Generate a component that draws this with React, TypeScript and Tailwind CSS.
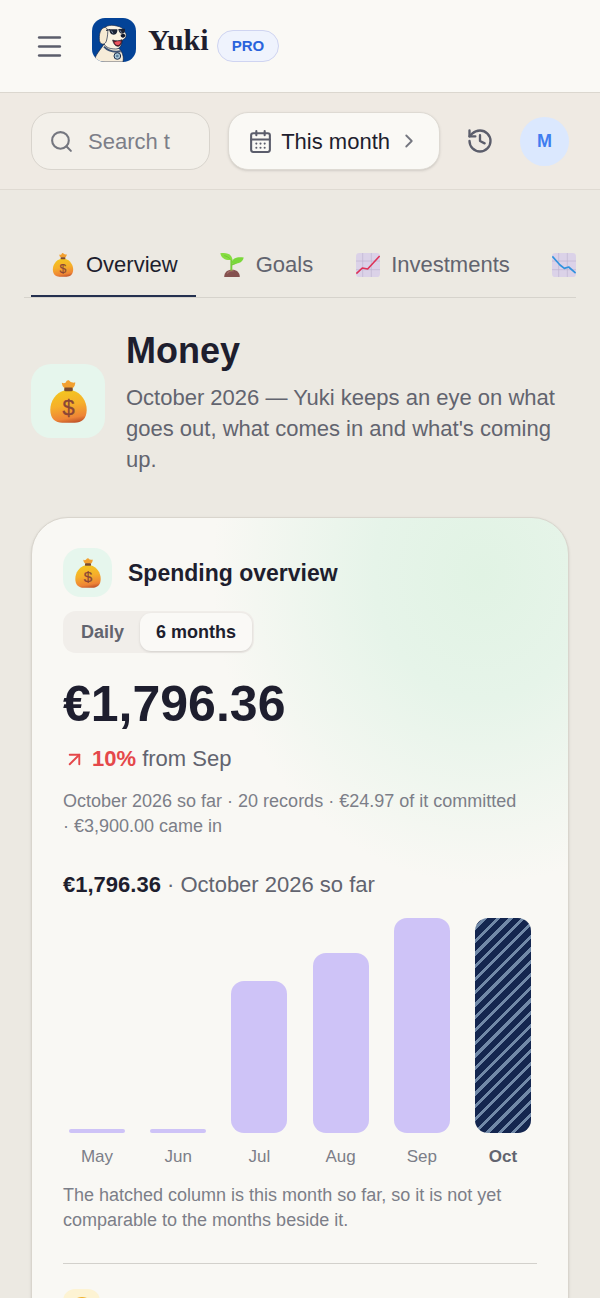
import React, { useId } from 'react'
import { ArrowUpRight, CalendarDays, ChevronRight, History, Menu, Search } from 'lucide-react'

const months = [
  { label: 'May', height: 4 },
  { label: 'Jun', height: 4 },
  { label: 'Jul', height: 152 },
  { label: 'Aug', height: 180 },
  { label: 'Sep', height: 215 },
  { label: 'Oct', height: 215, current: true },
]

function MoneyBag({ className }: { className?: string }) {
  const id = useId()
  return (
    <svg viewBox="-10 0 130 130" className={className} aria-hidden="true">
      <defs>
        <linearGradient id={id} x1="0.4" y1="0" x2="0.6" y2="1">
          <stop offset="0" stopColor="#f3c520" />
          <stop offset="0.45" stopColor="#f6b02a" />
          <stop offset="0.85" stopColor="#ee8436" />
          <stop offset="1" stopColor="#c2562a" />
        </linearGradient>
      </defs>
      <path d="M35 8q6 3 11 0q4-9 10-7q6 7 9 6q6 2 10 0q2 8-7 18H43Q34 16 35 8Z" fill="#f2a030" />
      <path d="M44 31C16 38 0 64 0 90c0 28 16 39 36 39h38c20 0 36-11 36-39 0-26-16-52-44-59Z" fill={`url(#${id})`} />
      <rect x="42" y="23" width="26" height="11" rx="4" fill="#7a4a2c" />
      <text
        x="55"
        y="106"
        textAnchor="middle"
        fontSize="66"
        fontFamily="Liberation Sans, sans-serif"
        fill="#8a4636"
        stroke="#8a4636"
        strokeWidth="1"
      >
        $
      </text>
    </svg>
  )
}

function Seedling() {
  return (
    <svg viewBox="0 0 72 74" className="size-6" aria-hidden="true">
      <path d="M12 74c0-14 10-22 24-22s24 8 24 22Z" fill="#85514f" />
      <path d="M22 62c4-6 10-8 18-7" stroke="#a06c66" strokeWidth="4" fill="none" strokeLinecap="round" />
      <path d="M34 54V18" stroke="#78cc3a" strokeWidth="6" />
      <path d="M34 36c10-2 14-6 18-8" stroke="#78cc3a" strokeWidth="5" fill="none" />
      <path d="M0 1c16-3 36 0 37 20C17 24 4 18 0 1Z" fill="#86dc40" />
      <path d="M72 14c-16-3-36 0-38 18c20 3 35-2 38-18Z" fill="#7ad83a" />
      <path d="M12 8c8 2 14 6 19 11" stroke="#65c030" strokeWidth="2" fill="none" />
    </svg>
  )
}

function TrendChart({ down = false }: { down?: boolean }) {
  return (
    <svg viewBox="0 0 72 72" className="size-6" aria-hidden="true">
      <rect width="72" height="72" rx="10" fill="#dbd2e8" />
      <path d="M20 0v72M46 0v72M0 24h72M0 50h72" stroke="#beb3d0" strokeWidth="2" />
      {down ? (
        <path d="M1 10l23 26l13 10l13-4l21 18" stroke="#3092de" strokeWidth="5" fill="none" strokeLinejoin="round" />
      ) : (
        <path d="M1 62l18-17l16 3L71 9" stroke="#de3358" strokeWidth="5" fill="none" strokeLinejoin="round" />
      )}
    </svg>
  )
}

function DogLogo() {
  return (
    <svg viewBox="0 0 132 132" className="size-11 rounded-[13px]" aria-hidden="true">
      <rect width="132" height="132" fill="#034397" />
      {/* Body */}
      <path
        d="M6 132c3-22 18-34 30-54l46 14c10 12 14 24 11 40Z"
        fill="#f6ecd9"
        stroke="#10203f"
        strokeWidth="2"
      />
      {/* Head */}
      <path
        d="M34 33c9-12 26-13 40-9c12 2 22 8 24 18c7 6 6 17-3 22c-3 1-4 2-5 6c-1 15-8 23-19 23c-15 0-30-4-35-16c-5-13-9-30-2-44Z"
        fill="#fbf3e2"
        stroke="#10203f"
        strokeWidth="2"
      />
      <path
        d="M40 28c-12 1-17 14-18 27c0 10-1 17 6 22c7 4 14-1 16-11c3-12 4-24 3-32Z"
        fill="#f7ead2"
        stroke="#10203f"
        strokeWidth="2"
      />
      {/* Sunglasses */}
      <path d="M42 37l12-2" stroke="#10182c" strokeWidth="3" />
      <path d="M52 34l24 0c1 9-3 16-11 16c-9 0-13-7-13-16Z" fill="#1c2436" />
      <path d="M79 33l20-1c1 9-2 15-9 15c-7 0-10-6-11-14Z" fill="#1c2436" />
      <path d="M58 38l5 8M84 37l4 7" stroke="#8290a6" strokeWidth="3" />
      {/* Nose and mouth */}
      <path d="M86 50c5-3 13-2 14 2c0 5-5 8-8 7c-4-1-7-5-6-9Z" fill="#10182c" />
      <path d="M62 66c9 4 20 3 28-1c-1 14-6 20-13 20c-8-1-13-9-15-19Z" fill="#6a1822" stroke="#10182c" strokeWidth="2" />
      <path d="M67 74c6-4 14-5 20-3c-4 13-14 13-20 3Z" fill="#ec5560" />
      {/* Collar */}
      <path d="M36 86c12 13 32 17 50 14" stroke="#3c5274" strokeWidth="6" fill="none" />
      <circle cx="76" cy="114" r="10" fill="#a9c6d6" stroke="#1c2d4c" strokeWidth="3" />
      <circle cx="76" cy="114" r="4" fill="#5c7f9c" />
    </svg>
  )
}

function Tab({ icon, label, active = false }: { icon: React.ReactNode; label?: string; active?: boolean }) {
  return (
    <button
      type="button"
      role="tab"
      aria-selected={active}
      aria-label={label ?? 'Spending'}
      className={`flex shrink-0 items-center gap-2.5 border-b-2 px-[18px] pt-4 pb-3.5 text-[22px] leading-8 ${
        active ? 'border-[#24304f] text-[#1e1e2e]' : 'border-transparent text-[#62646f]'
      }`}
    >
      <span className="flex w-[27px] justify-center">{icon}</span>
      {label}
    </button>
  )
}

function SpendingChart() {
  return (
    <ul className="mt-[17px] flex items-end justify-between px-1.5">
      {months.map((month) => (
        <li key={month.label} className="flex w-14 flex-col items-center">
          <div
            style={{ height: month.height }}
            className={`w-full ${month.height < 10 ? 'rounded-sm' : 'rounded-[13px]'} ${
              month.current
                ? 'bg-[repeating-linear-gradient(135deg,#14264f_0px,#14264f_6px,#7189a8_6px,#7189a8_9px)]'
                : 'bg-[#cec3f7]'
            }`}
          />
          <span
            className={`mt-3 text-[17px] leading-6 ${
              month.current ? 'font-bold text-[#62646f]' : 'text-[#7c7e88]'
            }`}
          >
            {month.label}
          </span>
        </li>
      ))}
    </ul>
  )
}

export default function App() {
  return (
    <div className="min-h-screen bg-[#ece9e2] font-['Liberation_Sans',Arial,sans-serif] text-[#1e1e2e]">
      {/* Header */}
      <header className="flex h-[93px] items-center border-b border-[#dbd7cf] bg-[#faf9f5] px-[34px]">
        <button type="button" aria-label="Open menu" className="text-[#5b5d6b]">
          <Menu size={31} strokeWidth={2} />
        </button>
        <a href="/" className="ml-[27px] flex items-center gap-3 pb-3">
          <DogLogo />
          <span className="font-['Liberation_Serif',serif] text-[30px] leading-9 font-bold">Yuki</span>
        </a>
        <span className="ml-2 rounded-full border border-[#cfd4f1] bg-[#eff3fd] px-3.5 text-[15px] leading-[30px] font-bold text-[#2a63dc]">
          PRO
        </span>
      </header>

      {/* Toolbar */}
      <div className="flex items-center gap-[18px] border-b border-[#dfdad2] bg-[#efeae3] px-[31px] py-[19px]">
        <label className="flex h-[58px] min-w-0 flex-1 items-center gap-3.5 rounded-[20px] border border-[#d8d4cd] bg-[#f3f0ea] px-[17px] text-[#74767f]">
          <Search size={25} strokeWidth={2} className="shrink-0" />
          <input
            type="search"
            aria-label="Search"
            placeholder="Search t"
            className="w-full min-w-0 bg-transparent text-[22px] outline-none placeholder:text-[#7c7e88]"
          />
        </label>
        <button
          type="button"
          className="flex h-[58px] items-center gap-2 rounded-[20px] border border-[#dedad3] bg-[#faf9f5] px-[19px] text-[22px] whitespace-nowrap shadow-sm"
        >
          <CalendarDays size={25} strokeWidth={2} className="text-[#5b5d6b]" />
          This month
          <ChevronRight size={22} strokeWidth={2} className="text-[#74767f]" />
        </button>
        <button type="button" aria-label="History" className="flex w-11 justify-center text-[#5b5d6b]">
          <History size={28} strokeWidth={2} />
        </button>
        <button
          type="button"
          className="flex size-[49px] items-center justify-center rounded-full bg-[#dbe8fe] text-[18px] font-bold text-[#3f7df0]"
        >
          M
        </button>
      </div>

      <main className="px-6 pt-[43px]">
        <div role="tablist" className="flex gap-[5px] overflow-hidden border-b border-[#d6d3cc] pl-[7px]">
          <Tab icon={<MoneyBag className="size-6" />} label="Overview" active />
          <Tab icon={<Seedling />} label="Goals" />
          <Tab icon={<TrendChart />} label="Investments" />
          <Tab icon={<TrendChart down />} />
        </div>

        <div className="px-[7px]">
          <div className="mt-[29px] flex items-center gap-[21px]">
            <div className="flex size-[74px] shrink-0 items-center justify-center rounded-[20px] bg-[#e6f6ed]">
              <MoneyBag className="size-[43px]" />
            </div>
            <div>
              <h1 className="text-[36px] leading-[48px] font-bold">Money</h1>
              <p className="mt-[7px] text-[22px] leading-[31px] text-[#62646f]">
                October 2026 — Yuki keeps an eye on what goes out, what comes in and what's coming up.
              </p>
            </div>
          </div>

          {/* Spending card */}
          <section className="mt-[42px] rounded-[37px] border border-[#d9d5cd] bg-[#f9f8f4] bg-[radial-gradient(270px_310px_at_84%_56px,#e1f3e4_0%,#e6f4e9_40%,#f9f8f400_100%)] px-[31px] pt-[30px] pb-8 shadow-sm">
            <div className="flex items-center gap-4">
              <div className="flex size-[49px] items-center justify-center rounded-[18px] bg-[#e6f6ed]">
                <MoneyBag className="size-[30px]" />
              </div>
              <h2 className="text-[23px] leading-8 font-bold">Spending overview</h2>
            </div>

            <div className="mt-3.5 inline-flex rounded-[13px] bg-[#f1eeea] p-0.5 text-[18px] leading-[38px] font-bold">
              <button type="button" className="px-4 text-[#62646f]">
                Daily
              </button>
              <button type="button" className="rounded-[11px] bg-[#faf9f6] px-4 shadow-sm">
                6 months
              </button>
            </div>

            <p className="mt-5 text-[50px] leading-[62px] font-bold">€1,796.36</p>
            <p className="mt-2 flex items-center text-[22px] leading-8 text-[#62646f]">
              <ArrowUpRight size={23} strokeWidth={2} className="mr-1.5 text-[#e5484a]" />
              <span>
                <strong className="font-bold text-[#e5484a]">10%</strong> from Sep
              </span>
            </p>
            <p className="mt-3.5 text-[18px] leading-[25px] text-[#7c7e88]">
              October 2026 so far · 20 records · €24.97 of it committed{' '}
              <span className="whitespace-nowrap">· €3,900.00 came in</span>
            </p>

            <p className="mt-[30px] text-[22px] leading-8 text-[#62646f]">
              <strong className="font-bold text-[#1e1e2e]">€1,796.36</strong> · October 2026 so far
            </p>
            <SpendingChart />
            <p className="mt-3.5 text-[18px] leading-[25px] text-[#7c7e88]">
              The hatched column is this month so far, so it is not yet comparable to the months beside it.
            </p>

            <hr className="mt-[30px] border-[#d3d1cc]" />
            <div className="mt-[25px] flex size-[37px] items-center justify-center rounded-xl bg-[#fdf3d3]">
              <svg viewBox="0 0 24 24" className="size-6" aria-hidden="true">
                <circle cx="12" cy="12" r="11" fill="#efb02e" />
                <circle cx="12" cy="14" r="7" fill="#f8d162" />
              </svg>
            </div>
          </section>
        </div>
      </main>
    </div>
  )
}
